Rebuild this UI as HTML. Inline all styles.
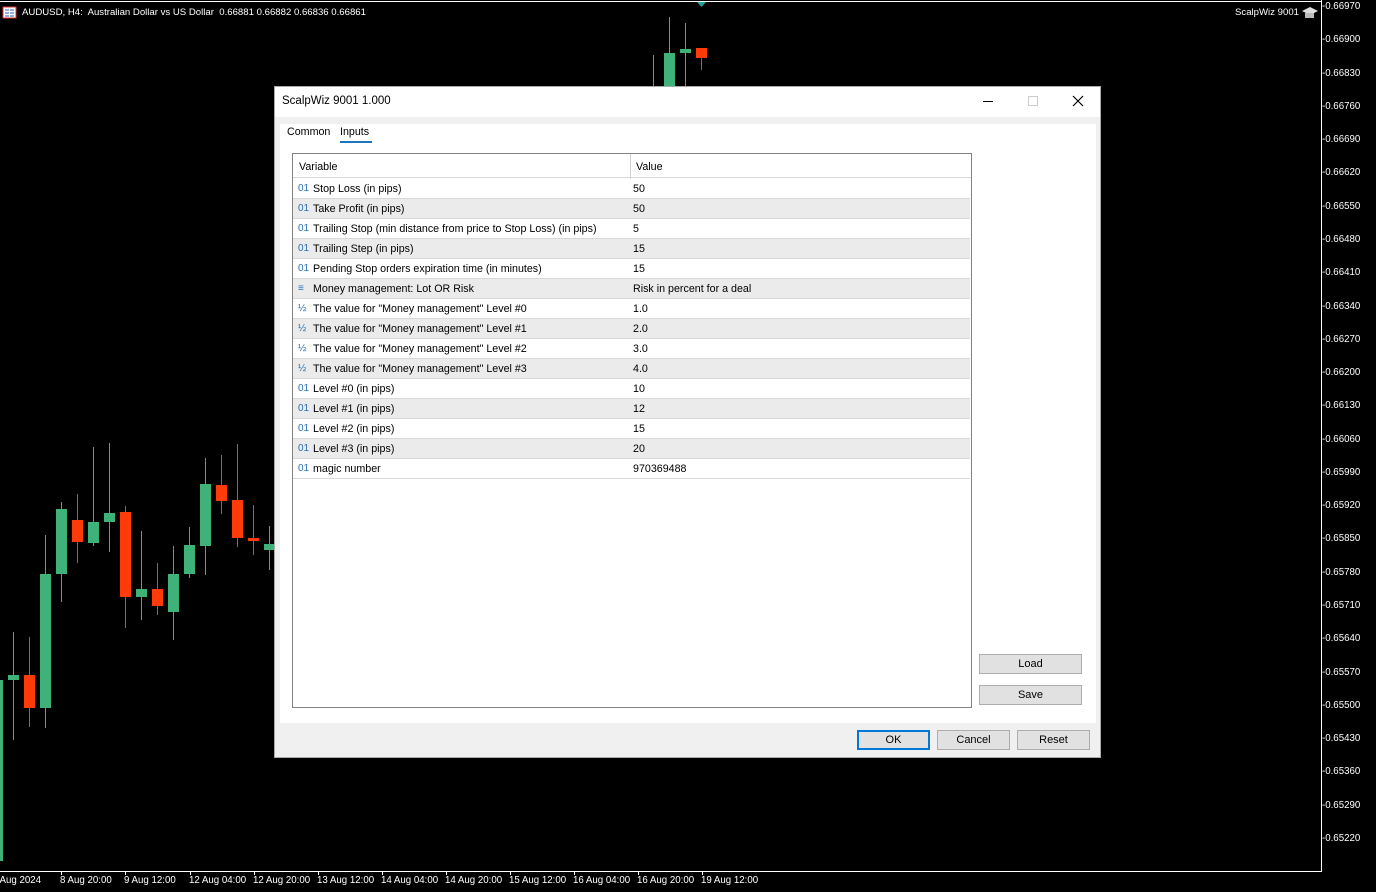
<!DOCTYPE html>
<html><head><meta charset="utf-8">
<style>
*{margin:0;padding:0;box-sizing:border-box}
body{width:1376px;height:892px;background:#000;position:relative;overflow:hidden;font-family:"Liberation Sans",sans-serif}
.ax{position:absolute;color:#fff;font-size:9.7px;white-space:nowrap}
.dlg{position:absolute;left:274px;top:86px;width:827px;height:672px;background:#f0f0f0;border:1px solid #aaa}
.t{position:absolute;font-size:11.5px;color:#000;white-space:nowrap}
.row{position:absolute;left:0;width:677px;height:20px;border-bottom:1px solid #d8d8d8;font-size:10.7px}
.row .v{position:absolute;left:20px;top:4px;white-space:nowrap}
.row .i{position:absolute;left:5px;top:4px;color:#2a6fb5;font-size:10px;white-space:nowrap}
.row .c{position:absolute;left:340px;top:4px;white-space:nowrap}
.btn{position:absolute;height:20px;background:#e1e1e1;border:1px solid #adadad;font-size:11px;text-align:center;line-height:18px}
</style></head><body>
<svg width="1376" height="892" style="position:absolute;left:0;top:0">
<line x1="0" y1="1.5" x2="1322" y2="1.5" stroke="#fff"/>
<line x1="1321.5" y1="0" x2="1321.5" y2="872" stroke="#fff"/>
<line x1="0" y1="871.5" x2="1322" y2="871.5" stroke="#fff"/>
<g stroke-width="1">
<g stroke="#3fb27a">
<line x1="13.5" y1="632" x2="13.5" y2="740"/><line x1="45.5" y1="535" x2="45.5" y2="728"/><line x1="61.5" y1="502" x2="61.5" y2="602"/><line x1="93.5" y1="447" x2="93.5" y2="546"/><line x1="109.5" y1="443" x2="109.5" y2="552"/><line x1="141.5" y1="531" x2="141.5" y2="620"/><line x1="173.5" y1="546" x2="173.5" y2="640"/><line x1="189.5" y1="527" x2="189.5" y2="578"/><line x1="205.5" y1="458" x2="205.5" y2="575"/><line x1="269.5" y1="526" x2="269.5" y2="570"/>
<line x1="653.5" y1="55" x2="653.5" y2="86"/><line x1="669.5" y1="17" x2="669.5" y2="86"/><line x1="685.5" y1="23" x2="685.5" y2="86"/>
</g>
<g stroke="#ff3b0a">
<line x1="29.5" y1="637" x2="29.5" y2="727"/><line x1="77.5" y1="494" x2="77.5" y2="563"/><line x1="125.5" y1="506" x2="125.5" y2="628"/><line x1="157.5" y1="563" x2="157.5" y2="615"/><line x1="221.5" y1="455" x2="221.5" y2="514"/><line x1="237.5" y1="444" x2="237.5" y2="547"/><line x1="253.5" y1="505" x2="253.5" y2="555"/><line x1="701.5" y1="48" x2="701.5" y2="70"/>
</g>
</g>
<g fill="#3fb27a">
<rect x="0" y="680" width="3" height="181"/><rect x="8" y="675" width="11" height="5"/><rect x="40" y="574" width="11" height="134"/><rect x="56" y="509" width="11" height="65"/><rect x="88" y="522" width="11" height="21"/><rect x="104" y="513" width="11" height="9"/><rect x="136" y="589" width="11" height="8"/><rect x="168" y="574" width="11" height="38"/><rect x="184" y="545" width="11" height="29"/><rect x="200" y="484" width="11" height="62"/><rect x="264" y="544" width="10" height="6"/>
<rect x="664" y="53" width="11" height="33"/><rect x="680" y="49" width="11" height="4"/>
</g>
<g fill="#ff3b0a">
<rect x="24" y="675" width="11" height="33"/><rect x="72" y="520" width="11" height="22"/><rect x="120" y="512" width="11" height="85"/><rect x="152" y="589" width="11" height="17"/><rect x="216" y="485" width="11" height="16"/><rect x="232" y="500" width="11" height="38"/><rect x="248" y="538" width="11" height="3"/><rect x="696" y="48" width="11" height="10"/>
</g>
<polygon points="697,2 706,2 701.5,7" fill="#1fa39a"/>
<rect x="3" y="7" width="13" height="11" fill="#fff" stroke="#d33" stroke-width="1"/>
<g stroke="#2a5fb5"><line x1="5" y1="10" x2="9" y2="10"/><line x1="10" y1="10" x2="14" y2="10"/><line x1="5" y1="13" x2="9" y2="13"/><line x1="10" y1="13" x2="14" y2="13"/><line x1="5" y1="16" x2="9" y2="16"/><line x1="10" y1="16" x2="14" y2="16"/></g>
<polygon points="1302,11 1310,7 1318,11 1310,15" fill="#ddd"/><rect x="1305" y="13" width="9" height="5" fill="#bbb"/>
</svg>
<div class="ax" style="left:22px;top:7px;font-size:9.6px">AUDUSD, H4:&nbsp; Australian Dollar vs US Dollar&nbsp; 0.66881 0.66882 0.66836 0.66861</div>
<div class="ax" style="right:77px;top:7px;font-size:9.6px">ScalpWiz 9001</div>
<div id="price"></div>
<div id="time"></div>
<div class="dlg">
 <div style="position:absolute;left:0;top:0;width:825px;height:30px;background:#fff"></div>
 <div class="t" style="left:7px;top:8px;font-size:11.5px">ScalpWiz 9001 1.000</div>
 <div style="position:absolute;left:708px;top:14px;width:10px;height:1px;background:#000"></div>
 <div style="position:absolute;left:753px;top:9px;width:10px;height:10px;border:1px solid #ccc"></div>
 <svg style="position:absolute;left:797px;top:8px" width="12" height="12"><path d="M1 1L11 11M11 1L1 11" stroke="#000" stroke-width="1.2"/></svg>
 <div style="position:absolute;left:5px;top:37px;width:816px;height:599px;background:#fff"></div>
 <div class="t" style="left:12px;top:39px;font-size:10.7px">Common</div>
 <div class="t" style="left:65px;top:39px;font-size:10.7px">Inputs</div>
 <div style="position:absolute;left:65px;top:54px;width:32px;height:2px;background:#1f74c2"></div>
 <div style="position:absolute;left:17px;top:66px;width:680px;height:555px;border:1px solid #828282;background:#fff">
  <div style="position:absolute;left:0;top:0;width:678px;height:24px;border-bottom:1px solid #d8d8d8;font-size:10.7px"><span style="position:absolute;left:6px;top:7px">Variable</span><span style="position:absolute;left:343px;top:7px">Value</span></div>
  <div style="position:absolute;left:337px;top:0;width:1px;height:325px;background:#d0d0d0"></div>
  <div id="rows"></div>
 </div>
 <div class="btn" style="left:704px;top:567px;width:103px">Load</div>
 <div class="btn" style="left:704px;top:598px;width:103px">Save</div>
 <div class="btn" style="left:582px;top:643px;width:73px;border:2px solid #0078d7;line-height:16px">OK</div>
 <div class="btn" style="left:662px;top:643px;width:73px">Cancel</div>
 <div class="btn" style="left:742px;top:643px;width:73px">Reset</div>
</div>
<script>
var p=["0.66970","0.66900","0.66830","0.66760","0.66690","0.66620","0.66550","0.66480","0.66410","0.66340","0.66270","0.66200","0.66130","0.66060","0.65990","0.65920","0.65850","0.65780","0.65710","0.65640","0.65570","0.65500","0.65430","0.65360","0.65290","0.65220"];
var h="";p.forEach(function(s,i){var y=6+i*33.28;h+='<div class="ax" style="left:1322px;top:'+(y-5)+'px">-'+s+'</div>';});
document.getElementById('price').innerHTML=h;
var t=[[-8,"8 Aug 2024"],[60,"8 Aug 20:00"],[124,"9 Aug 12:00"],[189,"12 Aug 04:00"],[253,"12 Aug 20:00"],[317,"13 Aug 12:00"],[381,"14 Aug 04:00"],[445,"14 Aug 20:00"],[509,"15 Aug 12:00"],[573,"16 Aug 04:00"],[637,"16 Aug 20:00"],[701,"19 Aug 12:00"]];
h="";t.forEach(function(a){h+='<div class="ax" style="left:'+a[0]+'px;top:875px">'+a[1]+'</div><div style="position:absolute;left:'+(a[0]+1)+'px;top:871px;width:1px;height:4px;background:#fff"></div>';});
document.getElementById('time').innerHTML=h;
var r=[["01","Stop Loss (in pips)","50"],["01","Take Profit (in pips)","50"],["01","Trailing Stop (min distance from price to Stop Loss) (in pips)","5"],["01","Trailing Step (in pips)","15"],["01","Pending Stop orders expiration time (in minutes)","15"],["&#8801;","Money management: Lot OR Risk","Risk in percent for a deal"],["&#189;",'The value for "Money management" Level #0',"1.0"],["&#189;",'The value for "Money management" Level #1',"2.0"],["&#189;",'The value for "Money management" Level #2',"3.0"],["&#189;",'The value for "Money management" Level #3',"4.0"],["01","Level #0 (in pips)","10"],["01","Level #1 (in pips)","12"],["01","Level #2 (in pips)","15"],["01","Level #3 (in pips)","20"],["01","magic number","970369488"]];
h="";r.forEach(function(a,i){h+='<div class="row" style="top:'+(25+i*20)+'px;background:'+(i%2?'#ebebeb':'#fff')+'"><span class="i">'+a[0]+'</span><span class="v">'+a[1]+'</span><span class="c">'+a[2]+'</span></div>';});
document.getElementById('rows').innerHTML=h;
</script>
</body></html>
